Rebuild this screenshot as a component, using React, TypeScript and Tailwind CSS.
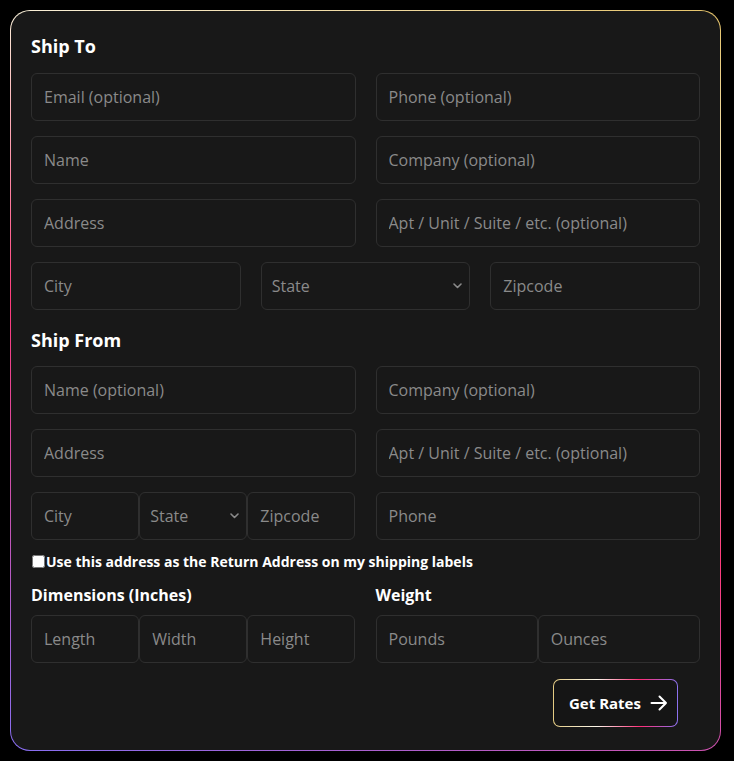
import React from 'react';

const inputCls =
  'h-12 w-full min-w-0 rounded-md border border-[#2f2f2f] bg-[#181818] px-3 text-base text-white placeholder:text-[#8a8a8a] outline-none focus:border-[#555]';

const Field = ({ placeholder }: { placeholder: string }) => (
  <input type="text" placeholder={placeholder} className={inputCls} />
);

const StateSelect = () => (
  <div className="relative w-full">
    <select
      defaultValue=""
      className="h-12 w-full appearance-none rounded-md border border-[#2f2f2f] bg-[#181818] pl-[10px] pr-6 text-base text-[#8a8a8a] outline-none"
    >
      <option value="">State</option>
      <option value="CA">CA</option>
      <option value="NY">NY</option>
      <option value="TX">TX</option>
    </select>
    <svg
      className="pointer-events-none absolute right-[8px] top-1/2 -translate-y-1/2"
      width="9"
      height="6"
      viewBox="0 0 9 6"
      fill="none"
    >
      <path d="M1 1l3.5 3.5L8 1" stroke="#8a8a8a" strokeWidth="1.6" strokeLinecap="round" strokeLinejoin="round" />
    </svg>
  </div>
);

const Heading = ({ children, className = '' }: { children: React.ReactNode; className?: string }) => (
  <h2 className={'text-lg leading-[31px] font-bold text-white ' + className}>{children}</h2>
);

export default function App() {
  return (
    <div className="min-h-screen bg-black pl-[10px] pt-[10px] font-['Open_Sans',sans-serif]">
      <div className="w-[711px] rounded-[20px] bg-[linear-gradient(200deg,#e6c46a_0%,#fbf1da_26%,#ff3b7b_55%,#876ff2_100%)] p-px">
        <div className="rounded-[19px] bg-[#181818] px-5 pt-5 pb-[23px]">
          <Heading className="mb-[11px]">Ship To</Heading>
          <div className="flex flex-col gap-[15px]">
            <div className="grid grid-cols-2 gap-5">
              <Field placeholder="Email (optional)" />
              <Field placeholder="Phone (optional)" />
            </div>
            <div className="grid grid-cols-2 gap-5">
              <Field placeholder="Name" />
              <Field placeholder="Company (optional)" />
            </div>
            <div className="grid grid-cols-2 gap-5">
              <Field placeholder="Address" />
              <Field placeholder="Apt / Unit / Suite / etc. (optional)" />
            </div>
            <div className="grid grid-cols-3 gap-5">
              <Field placeholder="City" />
              <StateSelect />
              <Field placeholder="Zipcode" />
            </div>
          </div>

          <Heading className="mt-[15px] mb-[10px]">Ship From</Heading>
          <div className="flex flex-col gap-[15px]">
            <div className="grid grid-cols-2 gap-5">
              <Field placeholder="Name (optional)" />
              <Field placeholder="Company (optional)" />
            </div>
            <div className="grid grid-cols-2 gap-5">
              <Field placeholder="Address" />
              <Field placeholder="Apt / Unit / Suite / etc. (optional)" />
            </div>
            <div className="grid grid-cols-2 gap-5">
              <div className="grid grid-cols-3">
                <Field placeholder="City" />
                <StateSelect />
                <Field placeholder="Zipcode" />
              </div>
              <Field placeholder="Phone" />
            </div>
          </div>

          <label className="mt-[11px] flex items-center text-sm leading-[21px] font-bold text-white">
            <input type="checkbox" className="m-0 mr-px ml-px h-[13px] w-[13px]" />
            Use this address as the Return Address on my shipping labels
          </label>

          <div className="mt-[11px] grid grid-cols-2 gap-5">
            <div>
              <h3 className="mb-2 text-base leading-6 font-bold text-white">Dimensions (Inches)</h3>
              <div className="grid grid-cols-3">
                <Field placeholder="Length" />
                <Field placeholder="Width" />
                <Field placeholder="Height" />
              </div>
            </div>
            <div>
              <h3 className="mb-2 text-base leading-6 font-bold text-white">Weight</h3>
              <div className="grid grid-cols-2">
                <Field placeholder="Pounds" />
                <Field placeholder="Ounces" />
              </div>
            </div>
          </div>

          <div className="mt-4 flex justify-end pr-[22px]">
            <button
              type="button"
              className="h-12 w-[125px] rounded-[7px] bg-[linear-gradient(90deg,#e4cb82_0%,#fdf8ec_35%,#ff2d78_70%,#8b72f0_100%)] p-px"
            >
              <span className="flex h-full w-full items-center gap-[9px] rounded-[6px] bg-[#151515] pl-[15px] text-[15px] font-bold text-white">
                Get Rates
                <svg width="18" height="16" viewBox="0 0 18 16" fill="none">
                  <path
                    d="M1.5 8h14.5M9.5 1.5L16 8l-6.5 6.5"
                    stroke="white"
                    strokeWidth="2"
                    strokeLinecap="round"
                    strokeLinejoin="round"
                  />
                </svg>
              </span>
            </button>
          </div>
        </div>
      </div>
    </div>
  );
}
